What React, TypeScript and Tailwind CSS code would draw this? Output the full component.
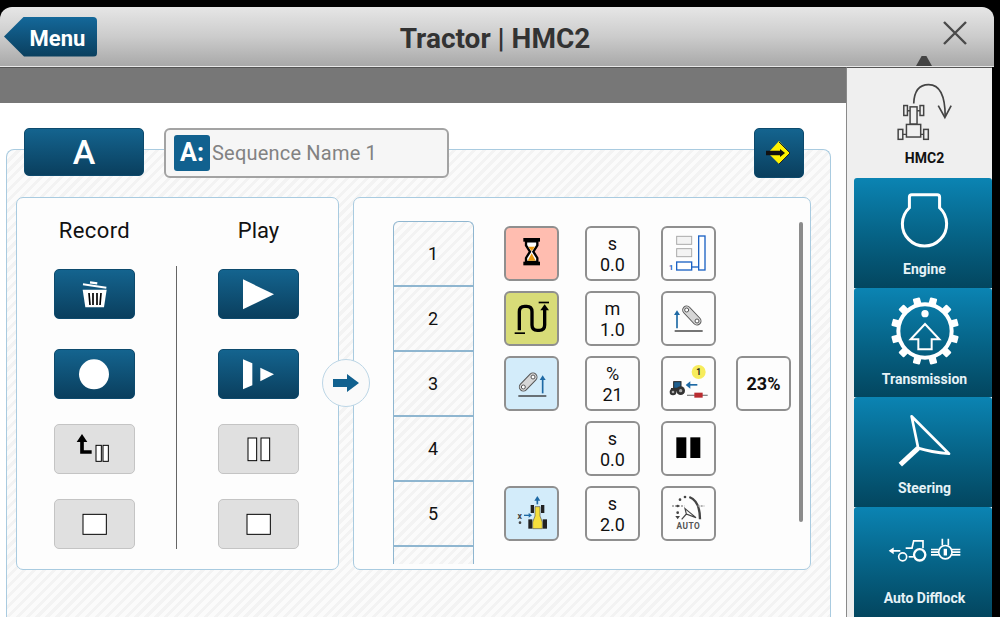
import React from 'react';

const blueBtn = "bg-gradient-to-b from-[#14648f] to-[#0a3f5e] rounded-[5px] border border-[#0d4a6d]";
const greyBtn = "bg-[#e0e0e0] rounded-[5px] border border-[#c4c4c4]";
const hatch = "bg-[repeating-linear-gradient(135deg,#f3f3f3_0,#f3f3f3_3px,#fbfbfb_3px,#fbfbfb_7px)]";

// control buttons are drawn on a 243x150 box
const CtrlIcon = ({ children }: { children: React.ReactNode }) => (
  <svg viewBox="0 0 243 150" className="block w-[81px] h-[50px] -m-px max-w-none">{children}</svg>
);

const CtrlBtn = ({ grey, children, className }: { grey?: boolean; children: React.ReactNode; className?: string }) => (
  <button className={`block w-[81px] h-[50px] ${grey ? greyBtn : blueBtn} ${className ?? ''}`}>
    <CtrlIcon>{children}</CtrlIcon>
  </button>
);

const StopIcon = () => <rect x="87" y="46" width="70" height="60" fill="#fff" stroke="#000" strokeWidth="3" />;

const Tile = ({ bg, children }: { bg?: string; children: React.ReactNode }) => (
  <div className={`w-[55px] h-[55px] rounded-[6px] border-2 border-[#8f8f8f] flex flex-col items-center justify-center ${bg ?? 'bg-[#fdfdfd]'}`}>
    {children}
  </div>
);

const ValueTile = ({ unit, value }: { unit: string; value: string }) => (
  <Tile>
    <span className="text-[18px] leading-[21px] text-[#111]">{unit}</span>
    <span className="text-[18px] leading-[21px] text-[#111]">{value}</span>
  </Tile>
);

const TileIcon = ({ children }: { children: React.ReactNode }) => (
  <svg viewBox="0 0 165 165" className="block w-[55px] h-[55px] -m-[2px] shrink-0 max-w-none">{children}</svg>
);

const UpArrow = ({ x, y1, y2 }: { x: number; y1: number; y2: number }) => (
  <>
    <line x1={x} y1={y1 + 10} x2={x} y2={y2} stroke="#1f6aa5" strokeWidth="5" />
    <polygon points={`${x - 9},${y1 + 14} ${x},${y1} ${x + 9},${y1 + 14}`} fill="#1f6aa5" />
  </>
);

const Link = ({ x1, y1, x2, y2 }: { x1: number; y1: number; x2: number; y2: number }) => (
  <>
    <line x1={x1} y1={y1} x2={x2} y2={y2} stroke="#555" strokeWidth="27" strokeLinecap="round" />
    <line x1={x1} y1={y1} x2={x2} y2={y2} stroke="#d6d6d6" strokeWidth="21" strokeLinecap="round" />
    <circle cx={x1} cy={y1} r="6" fill="#fff" stroke="#555" strokeWidth="3" />
    <circle cx={x2} cy={y2} r="6" fill="#fff" stroke="#555" strokeWidth="3" />
  </>
);

const Hourglass = () => (
  <TileIcon>
    <rect x="58" y="36" width="50" height="11" fill="#000" />
    <rect x="58" y="107" width="50" height="11" fill="#000" />
    <path d="M66 46 V58 L78 77 L66 96 V108 H100 V96 L88 77 L100 58 V46 Z" fill="#fff" stroke="#000" strokeWidth="7" />
    <path d="M73 62 H93 L83 75 Z M83 82 L71 104 H95 Z" fill="#e8980f" />
  </TileIcon>
);

const SCurve = () => (
  <TileIcon>
    <path d="M46 118 V62 Q46 46 62 46 H68 Q84 46 84 62 V102 Q84 118 100 118 H106 Q122 118 122 102 V52" fill="none" stroke="#000" strokeWidth="10" />
    <polygon points="109,58 122,40 135,58" fill="#000" />
    <rect x="32" y="124" width="31" height="5" fill="#000" />
    <rect x="104" y="32" width="31" height="5" fill="#000" />
  </TileIcon>
);

const LiftBars = () => (
  <TileIcon>
    <rect x="47" y="31" width="45" height="24" fill="#f3f3f3" stroke="#aaa" strokeWidth="3" />
    <rect x="47" y="68" width="45" height="24" fill="#f3f3f3" stroke="#aaa" strokeWidth="3" />
    <rect x="47" y="108" width="45" height="24" fill="#fff" stroke="#1c62c4" strokeWidth="4" />
    <rect x="113" y="30" width="19" height="102" fill="#fff" stroke="#1c62c4" strokeWidth="4" />
    <line x1="92" y1="123" x2="113" y2="123" stroke="#1c62c4" strokeWidth="4" />
    <text x="30" y="131" textAnchor="middle" fontSize="24" fontWeight="700" fill="#1c62c4">1</text>
  </TileIcon>
);

const LinkLeft = () => (
  <TileIcon>
    <UpArrow x={48} y1={58} y2={112} />
    <Link x1={77} y1={57} x2={108} y2={90} />
    <rect x="41" y="118" width="84" height="4" fill="#333" />
  </TileIcon>
);

const LinkRight = () => (
  <TileIcon>
    <Link x1={58} y1={93} x2={87} y2={63} />
    <UpArrow x={116} y1={58} y2={112} />
    <rect x="43" y="118" width="84" height="4" fill="#333" />
  </TileIcon>
);

const TractorCyl = () => (
  <TileIcon>
    <rect x="38" y="77" width="22" height="20" fill="#1f5f8f" stroke="#222" strokeWidth="3" />
    <rect x="30" y="96" width="34" height="10" fill="#333" />
    <circle cx="36" cy="108" r="10" fill="#333" />
    <circle cx="36" cy="108" r="4" fill="#aaa" />
    <circle cx="59" cy="104" r="13" fill="#333" />
    <circle cx="59" cy="104" r="5" fill="#aaa" />
    <rect x="87" y="84" width="22" height="5" fill="#1f6aa5" />
    <polygon points="88,76 74,87 88,98" fill="#1f6aa5" />
    <line x1="78" y1="118" x2="140" y2="118" stroke="#888" strokeWidth="4" />
    <rect x="100" y="110" width="25" height="15" fill="#b92c30" />
    <circle cx="113" cy="48" r="21" fill="#f7ec5c" />
    <text x="113" y="57" textAnchor="middle" fontSize="25" fontWeight="700" fill="#222">1</text>
  </TileIcon>
);

const TopTractor = () => (
  <TileIcon>
    <UpArrow x={100} y1={30} y2={55} />
    <rect x="80" y="57" width="10" height="24" fill="#222" />
    <rect x="111" y="57" width="10" height="24" fill="#222" />
    <rect x="73" y="100" width="12" height="28" fill="#222" />
    <rect x="116" y="100" width="13" height="28" fill="#222" />
    <path d="M93 62 H108 V90 L115 108 V128 H86 V108 L93 90 Z" fill="#f5df3c" stroke="#555" strokeWidth="2" />
    <text x="47" y="98" textAnchor="middle" fontSize="26" fontWeight="700" fill="#444">x</text>
    <line x1="60" y1="88" x2="76" y2="88" stroke="#1f6aa5" strokeWidth="4" />
    <polygon points="74,81 84,88 74,95" fill="#1f6aa5" />
    <circle cx="48" cy="110" r="4" fill="#444" />
  </TileIcon>
);

const AutoIcon = () => (
  <TileIcon>
    <path d="M85 33 Q117 45 117 100" fill="none" stroke="#444" strokeWidth="7" />
    <line x1="33" y1="60" x2="70" y2="60" stroke="#999" strokeWidth="4" strokeDasharray="6 3" />
    <line x1="110" y1="60" x2="130" y2="60" stroke="#999" strokeWidth="4" strokeDasharray="6 3" />
    <circle cx="57" cy="41" r="4" fill="#444" />
    <circle cx="72" cy="33" r="4" fill="#444" />
    <circle cx="50" cy="60" r="4" fill="#444" />
    <circle cx="50" cy="80" r="4" fill="#444" />
    <polygon points="43,90 57,90 50,100" fill="#444" />
    <path d="M72 68 L76 84 L105 95 Z M76 84 L62 100" fill="none" stroke="#444" strokeWidth="3.5" />
    <text x="82" y="130" textAnchor="middle" fontSize="25" fontWeight="700" fill="#555" letterSpacing="1.5">AUTO</text>
  </TileIcon>
);

const SideItem = ({ label, children }: { label: string; children: React.ReactNode }) => (
  <div className="ml-[7px] h-[110px] flex flex-col items-center pl-[3px] bg-gradient-to-b from-[#0b84b3] to-[#03465f] rounded-t-[3px]">
    <div className="h-[82px] w-full flex items-center justify-center pt-[4px]">{children}</div>
    <span className="text-[14px] leading-[18px] font-bold text-[#e6f2f7]">{label}</span>
  </div>
);

const gearTeeth = [0, 30, 60, 90, 120, 150, 180, 210, 240, 270, 300, 330];

const steps = [1, 2, 3, 4, 5];

export default function App() {
  return (
    <div className="w-[1000px] h-[617px] overflow-hidden bg-black pt-[7px] flex flex-col font-[Roboto,sans-serif]">
      {/* header */}
      <header className="relative w-[994px] h-[60px] shrink-0 rounded-t-[12px] bg-gradient-to-b from-[#e6e6e6] via-[#cccccc] to-[#a9a9a9] border-b border-[#e8e8e8] grid grid-cols-[1fr_auto_1fr] items-center pl-[4px]">
        <button className="w-[93px] h-[40px] bg-gradient-to-b from-[#14689a] to-[#0a3f5e] rounded-r-[4px] [clip-path:polygon(20px_0,100%_0,100%_100%,20px_100%,0_50%)] text-white text-[22px] font-bold pl-[14px] pt-[3px] justify-self-start">
          Menu
        </button>
        <h1 className="text-[28px] font-bold text-[#333] leading-none pr-[8px] pt-[4px]">Tractor | HMC2</h1>
        <svg viewBox="0 0 24 24" className="w-[24px] h-[24px] justify-self-end mr-[27px] mb-[7px]">
          <path d="M1 1 L23 23 M23 1 L1 23" stroke="#4a4a4a" strokeWidth="2.4" fill="none" />
        </svg>
        <span className="absolute right-[62px] bottom-0 w-[16px] h-[10px] bg-[#444] [clip-path:polygon(35%_0,65%_0,100%_100%,0_100%)]" />
      </header>

      <div className="flex-1 flex min-h-0">
        {/* main */}
        <main className="w-[846px] bg-white border-t border-[#555] flex flex-col min-h-0">
          <div className="h-[35px] shrink-0 bg-[#777777]" />
          <section className={`relative mt-[46px] ml-[6px] w-[825px] flex-1 border border-b-0 border-[#a9cbe0] rounded-t-[8px] ${hatch}`}>
            <div className="-mt-[22px] flex items-start pl-[17px] pr-[26px]">
              <button className={`w-[120px] h-[48px] text-white text-[34px] leading-[44px] font-medium ${blueBtn}`}>A</button>
              <div className="ml-[20px] w-[285px] h-[50px] bg-[#f6f6f6] border-2 border-[#a3a3a3] rounded-[6px] flex items-center pl-[8px]">
                <span className="w-[36px] h-[36px] bg-[#11618f] rounded-[3px] text-white text-[25px] font-bold flex items-center justify-center">A:</span>
                <span className="ml-[2px] text-[20px] tracking-[0.2px] text-[#828282]">Sequence Name 1</span>
              </div>
              <button className={`ml-auto w-[50px] h-[50px] ${blueBtn}`}>
                <svg viewBox="0 0 50 50" className="block w-[50px] h-[50px] -m-px max-w-none">
                  <polygon points="25,13 36,25 25,36 14,25" fill="#fff200" />
                  <path d="M25 14 L36 25 L25 36" fill="none" stroke="#222" strokeWidth="1" />
                  <path d="M12 25 H27" stroke="#111" strokeWidth="4.5" />
                  <polygon points="26,21 31,25 26,29" fill="#111" />
                </svg>
              </button>
            </div>

            <div className="relative mt-[19px] ml-[9px] flex gap-[14px]">
              {/* record / play */}
              <div className="w-[323px] h-[373px] bg-[#fdfdfd] border border-[#a9cbe0] rounded-[7px] flex">
                <div className="w-[159px] pl-[37px] pt-[20px]">
                  <div className="w-[81px] h-[26px] text-center text-[22px] leading-[26px] text-[#111] whitespace-nowrap tracking-[0.4px]">Record</div>
                  <CtrlBtn className="mt-[25px]">
                    <path d="M87 46 L157 56" stroke="#fff" strokeWidth="6" />
                    <rect x="108" y="38" width="22" height="7" fill="#fff" transform="rotate(8 119 41)" />
                    <polygon points="86,62 158,62 150,115 94,115" fill="#fff" />
                    <path d="M105 72 L108 108 M117 72 V108 M129 72 V108 M141 72 L138 108" stroke="#000" strokeWidth="5" />
                  </CtrlBtn>
                  <CtrlBtn className="mt-[30px]">
                    <circle cx="120" cy="76" r="45" fill="#fff" />
                  </CtrlBtn>
                  <CtrlBtn grey className="mt-[25px]">
                    <path d="M84 40 V84 H113" fill="none" stroke="#000" strokeWidth="11" />
                    <polygon points="68,54 84,30 100,54" fill="#000" />
                    <rect x="126" y="64" width="16" height="48" fill="#fff" stroke="#000" strokeWidth="3" />
                    <rect x="147" y="64" width="16" height="48" fill="#fff" stroke="#000" strokeWidth="3" />
                  </CtrlBtn>
                  <CtrlBtn grey className="mt-[25px]"><StopIcon /></CtrlBtn>
                </div>
                <div className="w-px h-[283px] mt-[68px] bg-[#666]" />
                <div className="flex-1 pl-[41px] pt-[20px]">
                  <div className="w-[81px] h-[26px] text-center text-[22px] leading-[26px] text-[#111]">Play</div>
                  <CtrlBtn className="mt-[25px]">
                    <polygon points="75,31 168,76 75,121" fill="#fff" />
                  </CtrlBtn>
                  <CtrlBtn className="mt-[30px]">
                    <polygon points="75,31 103,43 103,109 75,121" fill="#fff" />
                    <polygon points="127,56 168,76 127,97" fill="#fff" />
                  </CtrlBtn>
                  <CtrlBtn grey className="mt-[25px]">
                    <rect x="90" y="42" width="26" height="68" fill="#fff" stroke="#000" strokeWidth="3" />
                    <rect x="129" y="42" width="26" height="68" fill="#fff" stroke="#000" strokeWidth="3" />
                  </CtrlBtn>
                  <CtrlBtn grey className="mt-[25px]"><StopIcon /></CtrlBtn>
                </div>
              </div>

              {/* sequence steps */}
              <div className="relative w-[458px] h-[373px] bg-[#fdfdfd] border border-[#a9cbe0] rounded-[7px] flex items-start">
                <div className={`ml-[39px] mt-[23px] w-[81px] h-[343px] overflow-hidden border border-b-0 border-[#8fb6d0] rounded-t-[6px] ${hatch}`}>
                  {steps.map((n) => (
                    <div key={n} className="h-[65px] border-b-2 border-[#8fb6d0] flex items-center justify-center pr-[1px] text-[18px] text-[#111]">{n}</div>
                  ))}
                </div>
                <div className="ml-[30px] mt-[28px] grid grid-cols-[81px_76px_75px_55px] auto-rows-[55px] gap-y-[10px]">
                  <Tile bg="bg-[#ffbdb0]"><Hourglass /></Tile>
                  <ValueTile unit="s" value="0.0" />
                  <Tile><LiftBars /></Tile>
                  <div />

                  <Tile bg="bg-[#d8dc78]"><SCurve /></Tile>
                  <ValueTile unit="m" value="1.0" />
                  <Tile><LinkLeft /></Tile>
                  <div />

                  <Tile bg="bg-[#d3ecfa]"><LinkRight /></Tile>
                  <ValueTile unit="%" value="21" />
                  <Tile><TractorCyl /></Tile>
                  <Tile><span className="text-[18px] font-bold text-[#111]">23%</span></Tile>

                  <div />
                  <ValueTile unit="s" value="0.0" />
                  <Tile>
                    <TileIcon>
                      <rect x="46" y="49" width="30" height="62" fill="#000" />
                      <rect x="88" y="49" width="30" height="62" fill="#000" />
                    </TileIcon>
                  </Tile>
                  <div />

                  <Tile bg="bg-[#d3ecfa]"><TopTractor /></Tile>
                  <ValueTile unit="s" value="2.0" />
                  <Tile><AutoIcon /></Tile>
                  <div />
                </div>
                <div className="absolute left-[445px] top-[24px] w-[4px] h-[300px] bg-[#8c8c8c] rounded-[2px]" />
              </div>

              {/* arrow between panels */}
              <div className="absolute left-[306px] top-[162px] w-[48px] h-[48px] rounded-full bg-[#fafafa] border border-[#bcd6e6] flex items-center justify-center">
                <svg viewBox="0 0 26 18" className="w-[26px] h-[18px]">
                  <polygon points="0,5 14,5 14,0 26,9 14,18 14,13 0,13" fill="#11618f" />
                </svg>
              </div>
            </div>
          </section>
        </main>

        {/* right side menu */}
        <aside className="w-[146px] bg-[#efefef] border-l border-[#8a8a8a] border-t-[#555] border-t flex flex-col shrink-0">
          <div className="h-[110px] flex flex-col items-center pl-[10px] pt-[15px]">
            <svg viewBox="170 250 165 175" className="w-[55px] h-[58px]">
              <path d="M220 312 Q222 255 265 255 Q315 255 315 352" fill="none" stroke="#444" strokeWidth="5" />
              <path d="M294 318 L314 354 L333 318" fill="none" stroke="#444" strokeWidth="5" />
              <g fill="none" stroke="#444" strokeWidth="4.5">
                <rect x="190" y="318" width="11" height="30" />
                <rect x="239" y="318" width="11" height="30" />
                <rect x="209" y="322" width="21" height="52" />
                <rect x="198" y="375" width="43" height="38" />
                <rect x="173" y="390" width="14" height="30" />
                <rect x="250" y="390" width="14" height="30" />
                <path d="M201 334 H209 M230 334 H239 M187 405 H198 M241 405 H250" />
              </g>
            </svg>
            <span className="mt-[8px] text-[14px] leading-[18px] font-bold text-[#111]">HMC2</span>
          </div>
          <SideItem label="Engine">
            <svg viewBox="180 580 146 170" className="w-[49px] h-[57px]">
              <path d="M215 588 H291 Q298 588 298 595 V627 A66 66 0 1 1 208 627 V595 Q208 588 215 588 Z" fill="none" stroke="#fff" strokeWidth="9" />
            </svg>
          </SideItem>
          <SideItem label="Transmission">
            <svg viewBox="0 0 210 210" className="w-[70px] h-[70px]">
              <circle cx="105" cy="105" r="80" fill="none" stroke="#fff" strokeWidth="12" />
              {gearTeeth.map((a) => (
                <rect key={a} x="94" y="3" width="22" height="24" rx="3" fill="#fff" transform={`rotate(${a + 15} 105 105)`} />
              ))}
              <circle cx="105" cy="53" r="11" fill="#fff" />
              <path d="M105 84 L148 130 H125 V160 H85 V130 H62 Z" fill="none" stroke="#fff" strokeWidth="6" />
            </svg>
          </SideItem>
          <SideItem label="Steering">
            <svg viewBox="165 370 175 170" className="w-[58px] h-[57px]">
              <path d="M178 528 L232 478" stroke="#fff" strokeWidth="15" />
              <path d="M212 382 L325 495 Q270 490 232 478 Z" fill="none" stroke="#fff" strokeWidth="8" strokeLinejoin="round" />
            </svg>
          </SideItem>
          <SideItem label="Auto Difflock">
            <svg viewBox="140 745 225 80" className="w-[75px] h-[27px]">
              <g fill="none" stroke="#fff" strokeWidth="5">
                <path d="M150 786 H180 M196 778 H215 L220 756 H248 V778" />
                <circle cx="187" cy="804" r="12" />
                <circle cx="238" cy="798" r="17" strokeWidth="7" />
                <path d="M205 804 H220" />
                <circle cx="315" cy="790" r="20" />
                <path d="M272 782 H295 M272 790 H295 M272 798 H295 M335 782 H360 M335 790 H360 M335 798 H360 M306 750 V770 M324 750 V770" />
              </g>
              <polygon points="145,786 160,776 160,796" fill="#fff" />
              <rect x="310" y="780" width="10" height="20" fill="#fff" />
            </svg>
          </SideItem>
        </aside>
      </div>
    </div>
  );
}
